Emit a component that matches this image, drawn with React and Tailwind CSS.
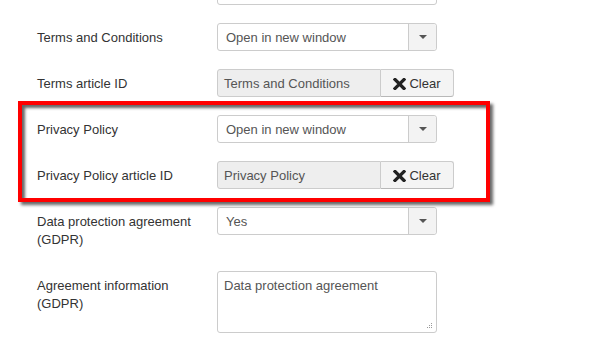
import React from "react";

function Caret() {
  return (
    <div className="w-[28px] h-full flex items-center justify-center bg-[#f3f3f3] border-l border-[#ccc] rounded-r-[3px]">
      <svg width="8" height="4" viewBox="0 0 8 4">
        <path d="M0 0 L8 0 L4 4 Z" fill="#555" />
      </svg>
    </div>
  );
}

function Select({ value }) {
  return (
    <div className="w-[220px] h-[28px] flex border border-[#ccc] rounded-[3px] bg-white">
      <div className="flex-1 flex items-center pl-[8px] pt-[1px] text-[#555]">{value}</div>
      <Caret />
    </div>
  );
}

function ArticleField({ value }) {
  return (
    <div className="flex h-[28px]">
      <div className="w-[164px] h-full flex items-center pl-[6px] pt-[1px] bg-[#eee] border border-[#ccc] rounded-l-[3px] text-[#555]">
        {value}
      </div>
      <div className="w-[73px] h-full flex items-center justify-center gap-[3px] pt-[1px] bg-[#f4f4f4] border border-l-0 border-[#ccc] border-b-[#b8b8b8] rounded-r-[3px] text-[#333]">
        <svg width="13" height="12" viewBox="0 0 13 12">
          <path d="M2 1.5 L11 10.5 M11 1.5 L2 10.5" stroke="#222" strokeWidth="3.2" strokeLinecap="square" />
        </svg>
        <span>Clear</span>
      </div>
    </div>
  );
}

function Row({ label, children }) {
  return (
    <div className="flex items-start">
      <div className="w-[160px] mr-[20px] pt-[6px] pb-[4px] leading-[18px] text-[#333]">{label}</div>
      {children}
    </div>
  );
}

export default function App() {
  return (
    <div className="relative w-[598px] h-[345px] overflow-hidden bg-white font-['Liberation_Sans',Arial,sans-serif] text-[13px] text-[#333]">
      <div className="pl-[37px] -mt-[23px] flex flex-col gap-[18px]">
        <Row label="">
          <div className="w-[220px] h-[28px] border border-[#ccc] rounded-[3px] bg-white" />
        </Row>
        <Row label="Terms and Conditions">
          <Select value="Open in new window" />
        </Row>
        <Row label="Terms article ID">
          <ArticleField value="Terms and Conditions" />
        </Row>
        <Row label="Privacy Policy">
          <Select value="Open in new window" />
        </Row>
        <Row label="Privacy Policy article ID">
          <ArticleField value="Privacy Policy" />
        </Row>
        <Row label="Data protection agreement (GDPR)">
          <Select value="Yes" />
        </Row>
        <Row label="Agreement information (GDPR)">
          <div className="relative w-[220px] h-[62px] border border-[#ccc] rounded-[3px] bg-white pl-[6px] pt-[5px] leading-[18px] text-[#555]">
            Data protection agreement
            <svg className="absolute right-[3px] bottom-[3px]" width="7" height="7" viewBox="0 0 7 7">
              <rect x="5" y="1" width="1" height="1" fill="#999" />
              <rect x="3" y="3" width="1" height="1" fill="#999" />
              <rect x="5" y="3" width="1" height="1" fill="#999" />
              <rect x="1" y="5" width="1" height="1" fill="#999" />
              <rect x="3" y="5" width="1" height="1" fill="#999" />
              <rect x="5" y="5" width="1" height="1" fill="#999" />
            </svg>
          </div>
        </Row>
      </div>
      <div className="absolute left-[18px] top-[101px] w-[472px] h-[101px] border-[4px] border-[#ff0000] shadow-[3px_3px_3px_rgba(0,0,0,0.6),inset_3px_3px_3px_rgba(0,0,0,0.6)]" />
    </div>
  );
}
